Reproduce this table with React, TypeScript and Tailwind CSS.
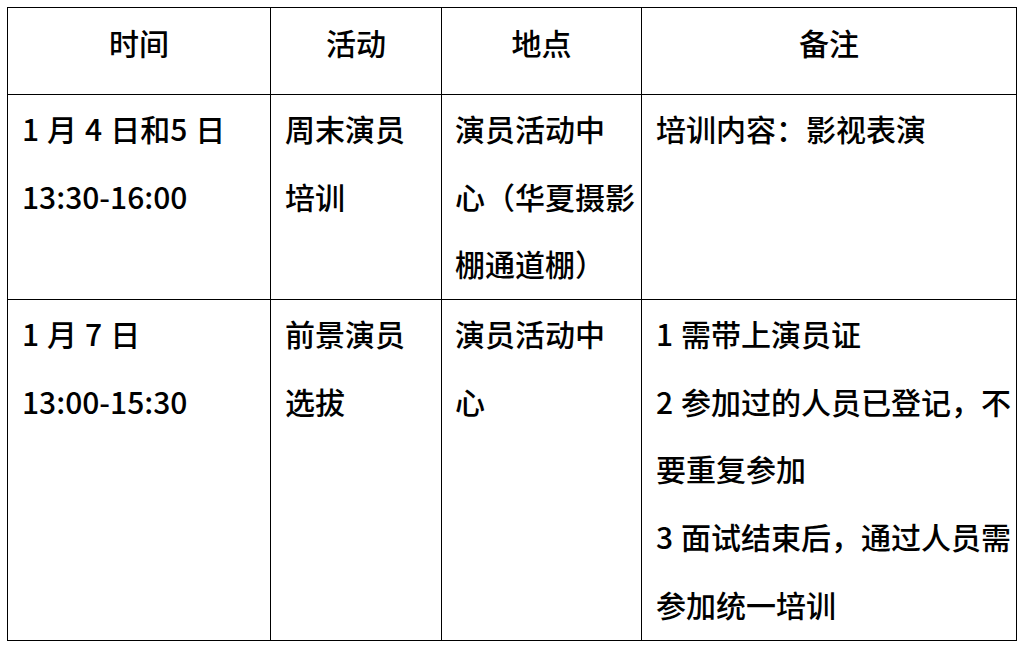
interface Row {
  time: string[];
  activity: string[];
  place: string[];
  note: string[];
  height: string;
}

const HEADERS = ["时间", "活动", "地点", "备注"];

const ROWS: Row[] = [
  {
    time: ["1 月 4 日和5 日", "13:30-16:00"],
    activity: ["周末演员", "培训"],
    place: ["演员活动中", "心（华夏摄影", "棚通道棚）"],
    note: ["培训内容：影视表演"],
    height: "h-[205px]",
  },
  {
    time: ["1 月 7 日", "13:00-15:30"],
    activity: ["前景演员", "选拔"],
    place: ["演员活动中", "心"],
    note: [
      "1 需带上演员证",
      "2 参加过的人员已登记，不",
      "要重复参加",
      "3 面试结束后，通过人员需",
      "参加统一培训",
    ],
    height: "h-[341px]",
  },
];

// spaces in the source are wider than the font's own space
function Lines({ lines }: { lines: string[] }) {
  return (
    <>
      {lines.map((line, i) => (
        <div key={i} className="whitespace-nowrap">
          {line.split(" ").map((part, j) => (
            <span key={j}>
              {j > 0 && <span className="inline-block w-[8px]" />}
              {part}
            </span>
          ))}
        </div>
      ))}
    </>
  );
}

export default function App() {
  return (
    <div className="min-h-screen bg-white pt-[7px] pl-[7px] text-black font-['SimHei','Noto_Sans_CJK_SC',sans-serif] text-[30px] leading-[67.7px] font-medium">
      <table className="w-[1009px] table-fixed border-collapse">
        <colgroup>
          <col className="w-[263px]" />
          <col className="w-[171px]" />
          <col className="w-[200px]" />
          <col className="w-[375px]" />
        </colgroup>
        <thead>
          <tr className="h-[87px]">
            {HEADERS.map((h) => (
              <th
                key={h}
                className="border border-black align-top pt-[1px] text-center font-medium"
              >
                {h}
              </th>
            ))}
          </tr>
        </thead>
        <tbody>
          {ROWS.map((row, i) => (
            <tr key={i} className={row.height}>
              <td className="border border-black align-top pl-[14px]">
                <Lines lines={row.time} />
              </td>
              <td className="border border-black align-top pl-[14px]">
                <Lines lines={row.activity} />
              </td>
              <td className="border border-black align-top pl-[13px]">
                <Lines lines={row.place} />
              </td>
              <td className="border border-black align-top pl-[14px]">
                <Lines lines={row.note} />
              </td>
            </tr>
          ))}
        </tbody>
      </table>
    </div>
  );
}
